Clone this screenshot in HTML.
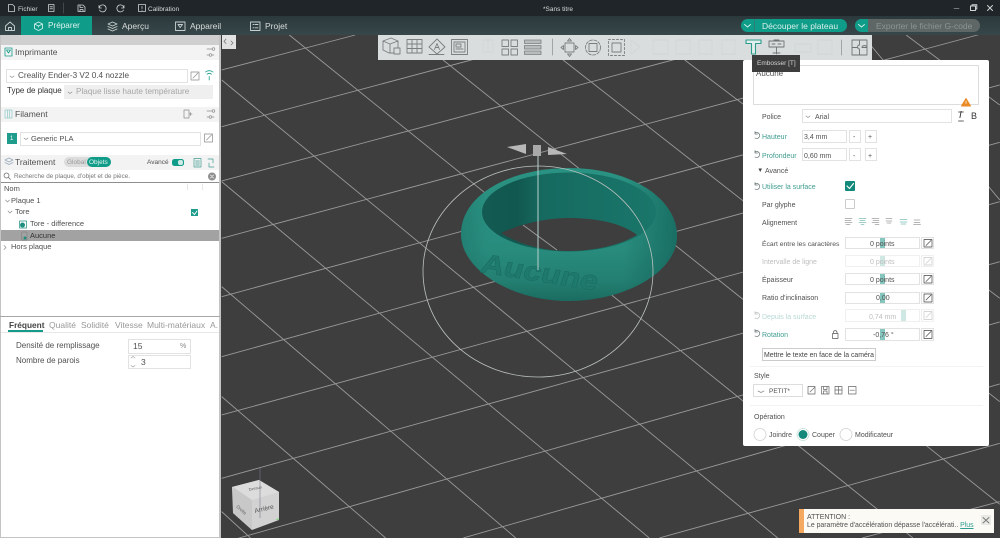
<!DOCTYPE html>
<html lang="fr">
<head>
<meta charset="utf-8">
<title>Sans titre</title>
<style>
html,body{margin:0;padding:0;width:1000px;height:538px;overflow:hidden;background:#3e3e3e}
body{position:relative;font-family:"Liberation Sans","DejaVu Sans",sans-serif;font-size:8px;color:#505050;filter:blur(.3px)}
.b{position:absolute;box-sizing:border-box}
.t{position:absolute;white-space:nowrap;line-height:10px;height:10px}
.w{color:#d8dcdc}
.g{color:#b5b5b5}
.c{color:#3f9d90}
.in{position:absolute;box-sizing:border-box;border:1px solid #e2e2e2;background:#fff}
svg{position:absolute;left:0;top:0}
</style>
</head>
<body>
<!-- 3D scene -->
<svg width="1000" height="538" viewBox="0 0 1000 538">
<defs>
<linearGradient id="body" x1="0" y1="0" x2="0" y2="1"><stop offset="0" stop-color="#2a9282"/><stop offset=".6" stop-color="#288c7d"/><stop offset=".85" stop-color="#237f71"/><stop offset="1" stop-color="#1a6b60"/></linearGradient>
<linearGradient id="side" x1="0" y1="0" x2="1" y2="0"><stop offset="0" stop-color="#0f5a52" stop-opacity=".25"/><stop offset=".12" stop-color="#0f5a52" stop-opacity="0"/><stop offset=".75" stop-color="#0f5a52" stop-opacity="0"/><stop offset="1" stop-color="#0f5a52" stop-opacity=".6"/></linearGradient>
<linearGradient id="wall" x1="0" y1="0" x2="1" y2="0"><stop offset="0" stop-color="#125a52"/><stop offset=".2" stop-color="#115850"/><stop offset=".35" stop-color="#166a60"/><stop offset="1" stop-color="#1a766a"/></linearGradient>
<clipPath id="hole"><path d="M501,233C520,224 545,218 570,218C600,218 625,225 637,235C620,245 595,251 568,251C545,251 520,245 501,233Z"/></clipPath>
</defs>
<rect width="1000" height="538" fill="#3e3e3e"/>
<g transform="translate(220,35) scale(.338,.3333)" stroke="#999" stroke-width="2.7" fill="none">
<path d="M5,105L400,0M5,275L1020,0M5,438L1615,0M5,610L1545,190L2307,-18M5,785L2307,150M5,965L2307,322M5,1140L2307,500M5,1330L2307,680M5,1524L2307,861M720,1509L2307,1047M1300,1509L2307,1225M1900,1509L2307,1400"/>
<path d="M5,135L1568,1440L1650,1509M205,0L1568,1115L2050,1509M5,440L1270,1509M5,755L875,1509M5,1085L490,1509M5,1430L90,1509M660,75L2307,1408M1015,75L2307,1100M1375,75L2307,790M1900,0L2307,495M2030,0L2307,210"/>
</g>
<path d="M461,234C461,195 510,168 569,168C630,168 677,198 677,236C677,272 625,301 569,301C512,301 461,270 461,234Z" fill="url(#body)"/>
<path d="M461,234C461,195 510,168 569,168C630,168 677,198 677,236C677,272 625,301 569,301C512,301 461,270 461,234Z" fill="url(#side)"/>
<ellipse cx="569" cy="212" rx="87" ry="39.5" fill="url(#wall)"/>
<path d="M501,233C520,224 545,218 570,218C600,218 625,225 637,235C620,245 595,251 568,251C545,251 520,245 501,233Z" fill="#3e3e3e"/>
<path d="M523,225L557,250" stroke="#999" clip-path="url(#hole)"/>
<text transform="translate(479,272) rotate(9) skewX(-8)" font-family="Liberation Sans" font-size="27" font-weight="bold" fill="#1f7a6e" stroke="#1a6a60" stroke-width=".5" textLength="118" lengthAdjust="spacingAndGlyphs">Aucune</text>
<ellipse cx="538" cy="271.5" rx="115" ry="105.5" fill="none" stroke="#bcc3c1" stroke-width=".8"/>
<path d="M538,155V270" stroke="#b9d2ce" stroke-width="1"/>
<path d="M507,147L526,144V154Z" fill="#b8b8b8"/>
<path d="M548,147L567,154L548,155Z" fill="#b8b8b8"/>
<rect x="533" y="145" width="8" height="11" fill="#a9a9a9"/>
<!-- nav cube -->
<path d="M232,487L259,480L279,492V520L252,530L233,513Z" fill="#d2d2d2"/>
<path d="M232,487L259,480L279,492L252,500Z" fill="#dcdcdc"/>
<path d="M252,500V530L233,513V487Z" fill="#c8c8c8"/>
<path d="M260,468V518" stroke="#77778f" stroke-width=".8" opacity=".7"/>
<path d="M275,520L279,518V520Z" fill="#8fd08f"/>
<text transform="translate(255,513) rotate(-13)" font-family="Liberation Sans" font-size="6.5" fill="#555">Arrière</text>
<text transform="translate(249,491) rotate(-12)" font-family="Liberation Sans" font-size="4" fill="#666">Dessus</text>
<text transform="translate(236,507) rotate(42)" font-family="Liberation Sans" font-size="4.5" fill="#666">Droite</text>
</svg>

<!-- top bars -->
<div class="b" style="left:0;top:0;width:1000px;height:16px;background:#1f2528"></div>
<div class="b" style="left:0;top:16px;width:1000px;height:19px;background:linear-gradient(#2c393c,#37474a)"></div>
<div class="b" style="left:21px;top:16px;width:71px;height:19px;background:#0f9c88"></div>
<div class="t w" style="left:18px;top:5px;font-size:6.5px">Fichier</div>
<div class="t w" style="left:148px;top:5px;font-size:6.5px">Calibration</div>
<div class="t w" style="left:543px;top:5px;font-size:6.5px">*Sans titre</div>
<div class="t" style="left:48px;top:21px;font-size:8.2px;color:#dff3ef">Préparer</div>
<div class="t w" style="left:122px;top:21px;font-size:8.5px">Aperçu</div>
<div class="t w" style="left:190px;top:21px;font-size:8.5px">Appareil</div>
<div class="t w" style="left:265px;top:21px;font-size:8.5px">Projet</div>
<div class="b" style="left:741px;top:19px;width:106px;height:13px;border-radius:7px;background:#0f9c88"></div>
<div class="b" style="left:754px;top:19px;width:1px;height:13px;background:#2d7f75"></div>
<div class="t" style="left:762px;top:21px;font-size:8.5px;color:#d9f0ec">Découper le plateau</div>
<div class="b" style="left:855px;top:19px;width:125px;height:13px;border-radius:7px;background:#5e6766"></div>
<div class="b" style="left:855px;top:19px;width:13px;height:13px;border-radius:7px 0 0 7px;background:#0f9c88"></div>
<div class="t" style="left:876px;top:21px;font-size:8.5px;color:#8d9493">Exporter le fichier G-code</div>

<!-- sidebar -->
<div class="b" style="left:0;top:35px;width:221px;height:503px;background:#fff;border-left:1px solid #c4c4c4;border-right:2px solid #c4c4c4;border-bottom:1px solid #c4c4c4"></div>
<div class="b" style="left:1px;top:35px;width:218px;height:10px;background:#cfcfcf"></div>
<div class="b" style="left:1px;top:45px;width:218px;height:15px;background:#f3f3f3"></div>
<div class="b" style="left:1px;top:107px;width:218px;height:15px;background:#f3f3f3"></div>
<div class="b" style="left:1px;top:155px;width:218px;height:15px;background:#f3f3f3"></div>
<div class="b" style="left:222px;top:35px;width:14px;height:14px;background:#e2e2e2"></div>
<div class="t" style="left:15px;top:47px;font-size:8.5px">Imprimante</div>
<div class="in" style="left:6px;top:69px;width:182px;height:14px"></div>
<div class="t" style="left:18px;top:71px;font-size:8.2px">Creality Ender-3 V2 0.4 nozzle</div>
<div class="t" style="left:7px;top:86px;font-size:8px;color:#333">Type de plaque</div>
<div class="b" style="left:64px;top:85px;width:149px;height:14px;background:#efefef"></div>
<div class="t" style="left:76px;top:87px;font-size:8.2px;color:#a5a5a5">Plaque lisse haute température</div>
<div class="t" style="left:15px;top:109px;font-size:8.5px">Filament</div>
<div class="b" style="left:7px;top:133px;width:10px;height:11px;background:#1f9c8b"></div>
<div class="t" style="left:10px;top:134px;font-size:6px;color:#fff">1</div>
<div class="in" style="left:20px;top:132px;width:181px;height:14px"></div>
<div class="t" style="left:31px;top:134px;font-size:7.5px">Generic PLA</div>
<div class="t" style="left:15px;top:157px;font-size:8.5px">Traitement</div>
<div class="b" style="left:64px;top:157px;width:47px;height:10px;border-radius:5px;background:#dcdcdc"></div>
<div class="b" style="left:87px;top:157px;width:24px;height:10px;border-radius:5px;background:#0f9c88"></div>
<div class="t" style="left:67px;top:158px;font-size:6.5px;color:#999">Global</div>
<div class="t" style="left:89px;top:158px;font-size:6.5px;color:#e6f5f2">Objets</div>
<div class="t" style="left:147px;top:158px;font-size:6.5px">Avancé</div>
<div class="b" style="left:172px;top:159px;width:12px;height:7px;border-radius:2.5px;background:#0f9c88"></div>
<div class="b" style="left:178px;top:160px;width:5px;height:5px;border-radius:2px;background:#cfe9e5"></div>
<div class="b" style="left:1px;top:170px;width:218px;height:13px;background:#fff;border-bottom:1px solid #8e8e8e"></div>
<div class="t" style="left:14px;top:172px;font-size:6.3px;color:#777">Recherche de plaque, d'objet et de pièce.</div>
<div class="t" style="left:4px;top:184px;font-size:7.5px">Nom</div>
<div class="t" style="left:11px;top:196px;font-size:7.5px">Plaque 1</div>
<div class="t" style="left:15px;top:207px;font-size:7.5px">Tore</div>
<div class="t" style="left:30px;top:219px;font-size:7.5px">Tore - difference</div>
<div class="b" style="left:1px;top:230px;width:218px;height:11px;background:#a2a2a2"></div>
<div class="t" style="left:30px;top:231px;font-size:7.5px;color:#333">Aucune</div>
<div class="t" style="left:11px;top:242px;font-size:7.5px">Hors plaque</div>
<div class="b" style="left:191px;top:209px;width:7px;height:7px;background:#1f9c8b"></div>
<div class="b" style="left:0;top:316px;width:220px;height:1px;background:#a8a8a8"></div>
<div class="t" style="left:9px;top:320px;font-size:8.3px;font-weight:bold;color:#444">Fréquent</div>
<div class="t g" style="left:49px;top:320px;font-size:8.5px;color:#999">Qualité</div>
<div class="t" style="left:81px;top:320px;font-size:8.5px;color:#999">Solidité</div>
<div class="t" style="left:115px;top:320px;font-size:8.5px;color:#999">Vitesse</div>
<div class="t" style="left:147px;top:320px;font-size:8.5px;color:#999">Multi-matériaux</div>
<div class="t" style="left:210px;top:320px;font-size:8.5px;color:#999">A.</div>
<div class="b" style="left:1px;top:332px;width:218px;height:1px;background:#e8e8e8"></div>
<div class="b" style="left:8px;top:330px;width:35px;height:2px;background:#169a89"></div>
<div class="t" style="left:16px;top:341px;font-size:8px">Densité de remplissage</div>
<div class="in" style="left:128px;top:339px;width:63px;height:15px"></div>
<div class="t" style="left:133px;top:341px;font-size:8.5px">15</div>
<div class="t" style="left:180px;top:342px;font-size:7px;color:#888">%</div>
<div class="t" style="left:16px;top:356px;font-size:8px">Nombre de parois</div>
<div class="in" style="left:128px;top:355px;width:63px;height:14px"></div>
<div class="t" style="left:141px;top:357px;font-size:8.5px">3</div>

<!-- toolbar -->
<div class="b" style="left:378px;top:35px;width:494px;height:25px;background:#dadddd"></div>

<!-- embossing panel -->
<div class="b" style="left:743px;top:60px;width:246px;height:386px;background:#fff;border-radius:2px"></div>
<div class="in" style="left:753px;top:65px;width:226px;height:40px;border-color:#ddd"></div>
<div class="t" style="left:756px;top:69px;font-size:8px">Aucune</div>
<div class="b" style="left:752px;top:55px;width:48px;height:17px;background:#3d3d3d"></div>
<div class="t" style="left:757px;top:59px;font-size:6.5px;color:#d6d6d6">Embosser [T]</div>
<div class="t" style="left:762px;top:113px;font-size:7px">Police</div>
<div class="in" style="left:802px;top:109px;width:150px;height:14px"></div>
<div class="t" style="left:815px;top:113px;font-size:7px">Arial</div>
<div class="t" style="left:959px;top:110px;font-size:10px;line-height:12px;font-style:italic;color:#333">I</div>
<div class="t" style="left:971px;top:110px;font-size:9px;line-height:12px;color:#333">B</div>
<div class="t c" style="left:762px;top:133px;font-size:7px">Hauteur</div>
<div class="in" style="left:802px;top:130px;width:45px;height:13px"></div>
<div class="t" style="left:804px;top:133px;font-size:7px">3,4 mm</div>
<div class="in" style="left:849px;top:130px;width:12px;height:13px"></div><div class="t" style="left:853px;top:133px;font-size:7px">-</div>
<div class="in" style="left:865px;top:130px;width:12px;height:13px"></div><div class="t" style="left:868px;top:133px;font-size:7px">+</div>
<div class="t c" style="left:762px;top:152px;font-size:7px">Profondeur</div>
<div class="in" style="left:802px;top:148px;width:45px;height:13px"></div>
<div class="t" style="left:804px;top:152px;font-size:7px">0,60 mm</div>
<div class="in" style="left:849px;top:148px;width:12px;height:13px"></div><div class="t" style="left:853px;top:152px;font-size:7px">-</div>
<div class="in" style="left:865px;top:148px;width:12px;height:13px"></div><div class="t" style="left:868px;top:152px;font-size:7px">+</div>
<div class="t" style="left:765px;top:167px;font-size:7px">Avancé</div>
<div class="t c" style="left:762px;top:183px;font-size:7px">Utiliser la surface</div>
<div class="b" style="left:845px;top:181px;width:10px;height:10px;background:#12897a;border-radius:1px"></div>
<div class="t" style="left:762px;top:201px;font-size:7px">Par glyphe</div>
<div class="b" style="left:845px;top:199px;width:10px;height:10px;background:#fff;border:1px solid #ccc;border-radius:1px"></div>
<div class="t" style="left:762px;top:219px;font-size:7px">Alignement</div>

<div class="t" style="left:762px;top:240px;font-size:6.8px">Écart entre les caractères</div>
<div class="in" style="left:845px;top:237px;width:75px;height:12px"></div>
<div class="b" style="left:880px;top:238px;width:5px;height:10px;background:#85c7be"></div>
<div class="t" style="left:870px;top:240px;font-size:7px">0 points</div>
<div class="in" style="left:921px;top:237px;width:13px;height:12px"></div>

<div class="t" style="left:762px;top:258px;font-size:7px;color:#bdbdbd">Intervalle de ligne</div>
<div class="in" style="left:845px;top:255px;width:75px;height:12px;border-color:#f0f0f0"></div>
<div class="b" style="left:880px;top:256px;width:5px;height:10px;background:#cfe8e4"></div>
<div class="t" style="left:870px;top:258px;font-size:7px;color:#bdbdbd">0 points</div>
<div class="in" style="left:921px;top:255px;width:13px;height:12px;border-color:#f0f0f0"></div>

<div class="t" style="left:762px;top:276px;font-size:7px">Épaisseur</div>
<div class="in" style="left:845px;top:273px;width:75px;height:12px"></div>
<div class="b" style="left:880px;top:274px;width:5px;height:10px;background:#85c7be"></div>
<div class="t" style="left:870px;top:276px;font-size:7px">0 points</div>
<div class="in" style="left:921px;top:273px;width:13px;height:12px"></div>

<div class="t" style="left:762px;top:294px;font-size:7px">Ratio d'inclinaison</div>
<div class="in" style="left:845px;top:292px;width:75px;height:12px"></div>
<div class="b" style="left:880px;top:293px;width:5px;height:10px;background:#85c7be"></div>
<div class="t" style="left:876px;top:294px;font-size:7px">0,00</div>
<div class="in" style="left:921px;top:292px;width:13px;height:12px"></div>

<div class="t" style="left:762px;top:313px;font-size:7px;color:#b7d8d3">Depuis la surface</div>
<div class="in" style="left:845px;top:309px;width:75px;height:13px;border-color:#f0f0f0"></div>
<div class="b" style="left:901px;top:310px;width:5px;height:11px;background:#cfe8e4"></div>
<div class="t" style="left:869px;top:313px;font-size:7px;color:#bdbdbd">0,74 mm</div>
<div class="in" style="left:921px;top:309px;width:13px;height:13px;border-color:#f0f0f0"></div>

<div class="t c" style="left:762px;top:331px;font-size:7px">Rotation</div>
<div class="in" style="left:845px;top:328px;width:75px;height:13px"></div>
<div class="b" style="left:880px;top:329px;width:5px;height:11px;background:#85c7be"></div>
<div class="t" style="left:873px;top:331px;font-size:7px">-0,76 °</div>
<div class="in" style="left:921px;top:328px;width:13px;height:13px"></div>

<div class="in" style="left:762px;top:348px;width:114px;height:13px;border-color:#ccc"></div>
<div class="t" style="left:764px;top:351px;font-size:6.9px;color:#444">Mettre le texte en face de la caméra</div>
<div class="b" style="left:750px;top:366px;width:233px;height:1px;background:#f2f2f2"></div>
<div class="t" style="left:754px;top:372px;font-size:7px">Style</div>
<div class="in" style="left:753px;top:384px;width:50px;height:13px;border-color:#ddd"></div>
<div class="t" style="left:769px;top:387px;font-size:6.5px">PETIT*</div>
<div class="b" style="left:750px;top:405px;width:233px;height:1px;background:#f2f2f2"></div>
<div class="t" style="left:754px;top:413px;font-size:7px">Opération</div>
<div class="t" style="left:769px;top:431px;font-size:7px">Joindre</div>
<div class="t" style="left:812px;top:431px;font-size:7px">Couper</div>
<div class="t" style="left:855px;top:431px;font-size:7px">Modificateur</div>

<!-- notification -->
<div class="b" style="left:799px;top:509px;width:195px;height:24px;background:#fbfaf5;border-left:5px solid #f5a860"></div>
<div class="t" style="left:807px;top:513px;font-size:7px">ATTENTION :</div>
<div class="t" style="left:807px;top:521px;font-size:6.9px">Le paramètre d'accélération dépasse l'accélérati.. <span style="color:#2f9d90;text-decoration:underline">Plus</span></div>
<div class="b" style="left:981px;top:515px;width:10px;height:10px;background:#e9e9e6"></div>

<!-- icons overlay -->
<svg width="1000" height="538" viewBox="0 0 1000 538" fill="none" stroke-linecap="round" stroke-linejoin="round">
<g stroke="#cfd5d5" stroke-width=".8">
<path d="M8.5,4.5H12.5L14.5,6.5V11.5H8.5Z"/>
<path d="M48.5,4.5H54V11.5H48.5ZM50,6.8H52.5M50,8.8H52.5"/>
<path d="M63.5,3V13" stroke="#4a5356"/>
<path d="M78,5H83L85,7V11.5H78ZM80,5V7.5H83M80,11.5V9.5H83V11.5"/>
<path d="M99,5.5V8H101.5M99.2,7.6A3.5,3.5 0 1 1 99.5,10"/>
<path d="M124,5.5V8H121.5M123.8,7.6A3.5,3.5 0 1 0 123.5,10"/>
<path d="M138.5,4.5H145.5V11.5H138.5ZM142,6.5V8.5M142,10V10.4"/>
<path d="M954,8.5H959" stroke="#8d9598"/>
<path d="M970.5,6H975.5V10.5H970.5ZM972,6V4.8H976.8V9H975.5" stroke-width="1"/>
<path d="M987.5,5.5L992.5,10.5M992.5,5.5L987.5,10.5" stroke-width="1"/>
</g>
<g stroke="#c6d0d0" stroke-width=".9">
<path d="M5.5,26L10,22L14.5,26V30.5H5.5ZM8.5,30.5V27.5H11.5V30.5"/>
<path d="M34.5,24L38.5,22L42.5,24V28.5L38.5,30.5L34.5,28.5ZM34.5,24L38.5,26L42.5,24M38.5,26V27" stroke="#cfeee9"/>
<path d="M108,24L112.5,22L117,24L112.5,26ZM108,26.5L112.5,28.5L117,26.5M108,29L112.5,31L117,29"/>
<path d="M175.5,22H185V30.5H175.5ZM178,24.5H182.5L180.2,27.5Z"/>
<path d="M250.5,22H260V30.5H250.5ZM253,24.5H253.8M255,24.5H258M253,27.8H253.8M255,27.8H258"/>
<path d="M744.5,24.5L747.5,27L750.5,24.5" stroke="#d7f1ed"/>
<path d="M858.5,24.5L861.5,27L864.5,24.5" stroke="#d7f1ed"/>
</g>
<!-- sidebar icons -->
<path d="M226,39L224,41.5L226,43.5M231,41L233,43L231,45" stroke="#777" stroke-width=".8"/>
<g stroke="#169a89" stroke-width=".8">
<path d="M5,48H12V56H5ZM6.5,50H10.5L8.5,53Z"/>
<path d="M5,110H12V118H5ZM7.5,110V118M9.5,110V118" stroke="#9cc"/>
<path d="M5,160L9,158L13,160L9,162ZM5,162.5L9,164.5L13,162.5" stroke="#9ab"/>
<path d="M205.5,72A6,6 0 0 1 213,72M207,74.2A3.6,3.6 0 0 1 211.5,74.2M209.2,76.5V80"/>
</g>
<g stroke="#8b8b8b" stroke-width=".7">
<path d="M207,49H212M207,55H209M212,55H214"/><circle cx="213.5" cy="49" r="1.3"/><circle cx="210.5" cy="55" r="1.3"/>
<path d="M207,111H212M207,117H209M212,117H214"/><circle cx="213.5" cy="111" r="1.3"/><circle cx="210.5" cy="117" r="1.3"/>
<path d="M184,110H189V118H184ZM189,114H192M190.5,112.5V115.5" />
<path d="M191,72H199V80H191ZM193,78L198,73"/>
<path d="M204.5,134H212.5V142H204.5ZM206.5,140L211.5,135"/>
<path d="M194,158.5H201V167H194ZM195.5,161H199.5M195.5,163H199.5M195.5,165H199.5" stroke="#3f9d90"/>
<path d="M208,159H213V163M214,167H209V163" stroke="#3f9d90"/>
<path d="M10,76L12,77.5L14,76M68,92L70,93.5L72,92M24,138L26,139.5L28,138M806,116L808,117.5L810,116M758,391L761,392.5L764,391"/>
<path d="M5.5,200L7.5,202L9.5,200M8,211L10,213L12,211M4,245.5L6,247.5L4,249.5"/>
<circle cx="6.5" cy="175.5" r="2.5" stroke="#666"/><path d="M8.5,177.5L10.5,179.5" stroke="#666"/>
</g>
<circle cx="212" cy="176.5" r="4" fill="#8f8f8f"/>
<path d="M210.5,175L213.5,178M213.5,175L210.5,178" stroke="#fff" stroke-width=".7"/>
<path d="M192.5,212.5L194.5,214.5L197,211" stroke="#fff" stroke-width=".9"/>
<g stroke="#c8d0d0" stroke-width=".5"><path d="M187.5,184V190M202.5,184V190"/></g>
<rect x="19.5" y="221" width="7" height="7" stroke="#1f8f80" stroke-width=".7"/><circle cx="22.5" cy="225" r="2.5" fill="#1f8f80"/>
<rect x="22" y="232" width="5" height="8" stroke="#777" stroke-width=".5"/><circle cx="25" cy="238" r="1.5" fill="#1f8f80"/>
<path d="M131,358L133,356.5L135,358M131,365.5L133,367L135,365.5" stroke="#999" stroke-width=".6"/>
<!-- toolbar icons -->
<g stroke="#7a7f7f" stroke-width=".9">
<path d="M383,41L391,38L398,41V53H389L383,50ZM383,41L390,44L398,41M390,44V53"/><path d="M394,48H400V54H394Z" fill="#dadddd"/>
<path d="M407,39.5H422V53H407ZM407,44H422M407,48.5H422M412,39.5V53M417,39.5V53"/>
<path d="M437,39L445,47L437,54L429,47ZM434.5,49.5L437,43.5L439.5,49.5M435.5,47.5H438.5M429,54.5H444"/>
<path d="M451.5,39.5H467.5V54.5H451.5ZM454,42H465V52H454ZM456,44H461V47H456ZM456,49H463"/>
<path d="M502,40H508.5V46.5H502ZM511,40H517.5V46.5H511ZM502,49H508.5V55H502ZM511,49H517.5V55H511Z"/>
<path d="M524.5,40H541V43.5H524.5ZM524.5,45.5H541V49H524.5ZM524.5,51H541V54.5H524.5Z" stroke-width=".8" fill="#b8bcbc"/>
<path d="M552.5,39V55" stroke="#9aa0a0"/>
<path d="M565,43H574V52H565ZM569.5,38.5L567.5,41H571.5ZM569.5,56.5L567.5,54H571.5ZM561,47.5L563.5,45.5V49.5ZM578,47.5L575.5,45.5V49.5Z"/>
<path d="M589,43.5H597V51.5H589Z"/><circle cx="593" cy="47.5" r="7.5" stroke-dasharray="3 1.5"/>
<path d="M612,43H621V52H612Z"/><path d="M608.5,39.5H624.5V55.5H608.5Z" stroke-dasharray="2 2"/>
</g>
<g stroke="#d2d5d5" stroke-width=".9">
<path d="M483,40L493,40V52H483ZM488,40V52"/>
<path d="M631,40L640,47L631,54ZM653,40H668V54H653ZM676,40H690V54H676ZM699,40H712V54H699ZM722,40H735V54H722Z"/>
<path d="M795,44H811V52H795ZM818,40H832V54H818Z"/>
</g>
<path d="M746,40H761V43.5H755.5V54H751.5V43.5H746Z" stroke="#2c9d8d" stroke-width="1.1" fill="#e4eeec"/>
<g stroke="#6e7474" stroke-width=".9">
<path d="M769,41H784V47H769ZM772,44H775M778,44H781M774,40H779M776.5,47V54M773,53H780"/>
<path d="M841.5,40V55" stroke="#9aa0a0"/>
<path d="M852,40H867V55H852ZM859.5,40V45C857,45 857,49 859.5,49V55M852,47.5H857M862,47.5H867C867,45 862,45 862,47.5"/>
</g>
<!-- panel icons -->
<path d="M966,98.5L970.5,106H961.5Z" fill="#e98a25" stroke="#e98a25"/>
<path d="M966,101V103.5" stroke="#fff" stroke-width=".7"/>
<path d="M958.5,112H963.5M958.5,121H963.5" stroke="#333" stroke-width=".8"/>
<g stroke="#5f6b6b" stroke-width=".7">
<path d="M755,133A3,3 0 1 1 755,138M755,131.5V134H757.5"/>
<path d="M755,152A3,3 0 1 1 755,157M755,150.5V153H757.5"/>
<path d="M755,184A3,3 0 1 1 755,189M755,182.5V185H757.5"/>
<path d="M755,331A3,3 0 1 1 755,336M755,329.5V332H757.5"/>
<path d="M755,313A3,3 0 1 1 755,318M755,311.5V314H757.5" opacity=".45"/>
</g>
<path d="M758.5,168.5H762L760.2,172Z" fill="#444"/>
<path d="M847,186L849.5,188.5L853.5,183.5" stroke="#fff" stroke-width="1.1"/>
<g stroke="#6f6f6f" stroke-width=".6">
<path d="M845,218.5H852M845,220.5H851M845,222.5H852M846,224.5H850"/>
<path d="M859,218.5H866M860,220.5H865M859,222.5H866M861,224.5H864" stroke="#3f9d90"/>
<path d="M872,218.5H879M873,220.5H879M872,222.5H879M875,224.5H879"/>
<path d="M886,218.5H892M886,221H892M887,223H891"/>
<path d="M900,219.5H907M900,222H907M901,224H906" stroke="#3f9d90"/>
<path d="M914,220H920M914,222.5H920M913.5,224.5H920.5"/>
</g>
<g stroke="#444" stroke-width=".7">
<path d="M924,239.5H932V247H924ZM926,245.5L931,240.5"/>
<path d="M924,275.5H932V283H924ZM926,281.5L931,276.5"/>
<path d="M924,294H932V302H924ZM926,300L931,295"/>
<path d="M924,330.5H932V338.5H924ZM926,336.5L931,331.5"/>
</g>
<g stroke="#c9c9c9" stroke-width=".7">
<path d="M924,257.5H932V265H924ZM926,263.5L931,258.5"/>
<path d="M924,311.5H932V319.5H924ZM926,317.5L931,312.5"/>
</g>
<path d="M832.5,333.5H838V338.5H832.5ZM833.5,333.5V332A1.8,1.8 0 0 1 837,332V333.5" stroke="#555" stroke-width=".7"/>
<g stroke="#666" stroke-width=".7">
<path d="M808,386.5H815V394H808ZM810,392L814.5,387.5"/>
<path d="M821.5,386.5H829V394H821.5ZM823.5,386.5V389.5H827V386.5M823.5,394V391H827V394"/>
<path d="M835,386.5H842V394H835ZM838.5,386.5V394M835,390H842"/>
<path d="M848.5,386.5H856V394H848.5ZM850,390.2H854.5"/>
</g>
<circle cx="760" cy="434.5" r="6" stroke="#cfcfcf" stroke-width=".8" fill="#fff"/>
<circle cx="803" cy="434.5" r="6" stroke="#bfdcd8" stroke-width=".8" fill="#fff"/>
<circle cx="803" cy="434.5" r="4.5" fill="#12897a"/>
<circle cx="846" cy="434.5" r="6" stroke="#cfcfcf" stroke-width=".8" fill="#fff"/>
<path d="M983,517.5L989,523M989,517.5L983,523" stroke="#777" stroke-width=".9"/>
</svg>
</body>
</html>
